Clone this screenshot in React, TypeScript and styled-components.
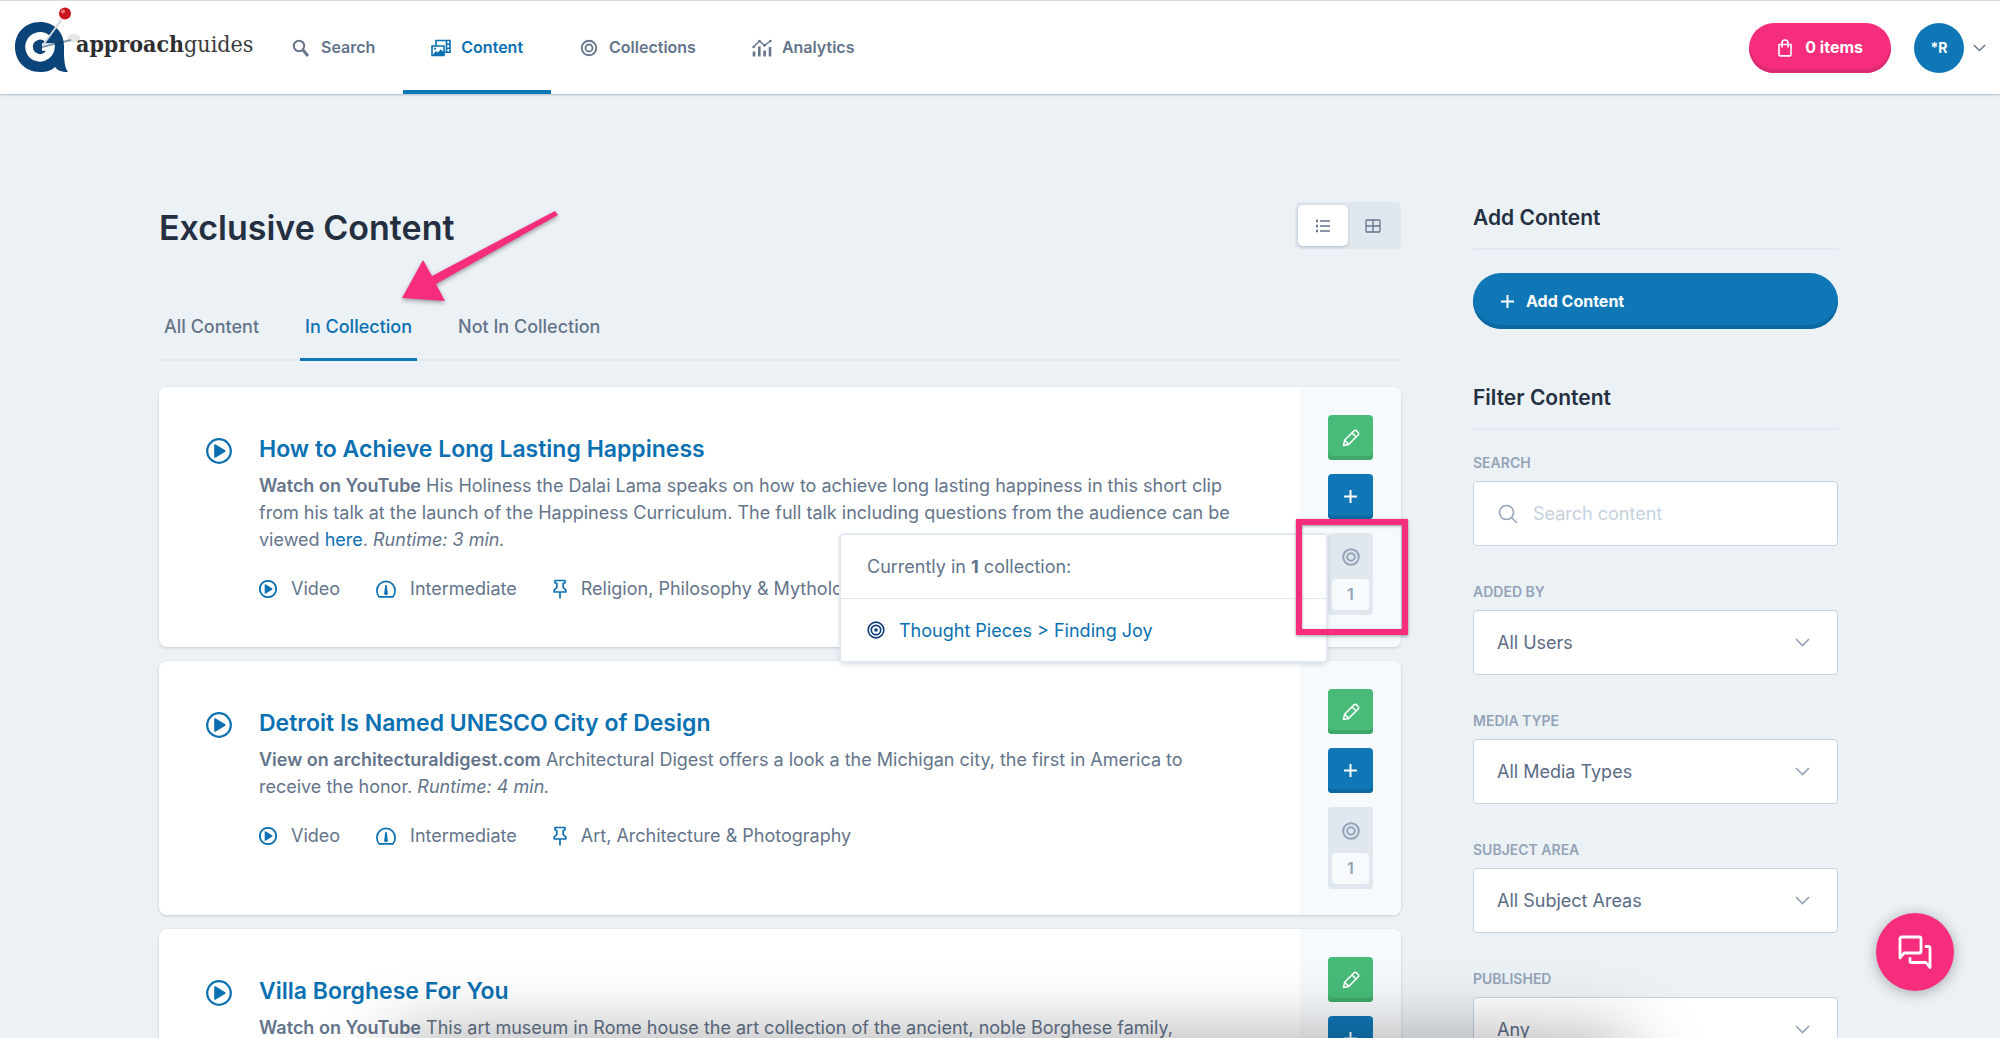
import React from "react";
import styled, { createGlobalStyle, css } from "styled-components";

const color = {
  page: "#ecf1f5",
  line: "#e1e8ef",
  text: "#64748b",
  muted: "#94a3b8",
  ink: "#242f42",
  blue: "#0a70b2",
  button: "#1077b6",
  green: "#48bb78",
  pink: "#f62d7c",
  well: "#e1e7ef",
};

const GlobalStyle = createGlobalStyle`
  *, *::before, *::after { box-sizing: border-box; }
  html { scrollbar-width: none; }
  body {
    margin: 0;
    background: ${color.page};
    color: ${color.text};
    font-family: Inter, "Liberation Sans", sans-serif;
    font-size: 18px;
    line-height: 27px;
  }
  h1, h2, h3, p { margin: 0; }
  button, input, select { font: inherit; color: inherit; }
  button { border: 0; padding: 0; cursor: pointer; }
  a { color: ${color.blue}; text-decoration: none; }
  svg { display: block; flex: none; }
`;

const Page = styled.div`
  min-height: 100vh;
  overflow: hidden;
`;

/* Header */

const Header = styled.header`
  display: flex;
  align-items: center;
  justify-content: space-between;
  height: 94px;
  padding: 0 14px 0 15px;
  background: #fff;
  border-top: 1px solid #d5dce2;
  box-shadow: 0 1px 2px rgba(30, 50, 70, 0.3);
`;

const HeaderGroup = styled.div`
  display: flex;
  align-items: center;
  align-self: stretch;
`;

const Brand = styled.a`
  display: flex;
  align-items: flex-start;
  align-self: stretch;
  width: 248px;
  padding-top: 6px;
  color: #3a3a3c;
  font-family: "DejaVu Serif Condensed", "DejaVu Serif", serif;
  font-size: 23px;
  line-height: 30px;
  svg { margin-right: -4px; }
  strong { color: #2e2e30; }
`;

const Wordmark = styled.span`
  padding-top: 22px;
`;

const Nav = styled.nav`
  display: flex;
  align-self: stretch;
`;

const NavLink = styled.a<{ $active?: boolean }>`
  display: flex;
  align-items: center;
  gap: 10px;
  padding: 0 28px;
  font-size: 16px;
  font-weight: 600;
  color: ${(p) => (p.$active ? color.blue : color.text)};
  box-shadow: ${(p) => (p.$active ? `inset 0 -4px ${color.button}` : "none")};
`;

const CartButton = styled.button`
  display: flex;
  align-items: center;
  gap: 12px;
  height: 50px;
  padding: 0 28px;
  border-radius: 25px;
  background: ${color.pink};
  box-shadow: inset 0 -4px #dc2b72;
  color: #fff;
  font-size: 16px;
  font-weight: 700;
`;

const AccountButton = styled.button`
  display: flex;
  align-items: center;
  gap: 9px;
  margin-left: 23px;
  background: none;
`;

const Avatar = styled.span`
  display: grid;
  place-items: center;
  width: 50px;
  height: 50px;
  border-radius: 50%;
  background: ${color.button};
  color: #fff;
  font-size: 14px;
  font-weight: 700;
`;

/* Page layout */

const Main = styled.main`
  display: grid;
  grid-template-columns: minmax(0, 1fr) 365px;
  gap: 72px;
  padding: 108px 162px 0 159px;
`;

const TitleRow = styled.div`
  display: flex;
  justify-content: space-between;
  align-items: flex-start;
  height: 48px;
`;

const PageTitle = styled.h1`
  padding-top: 2px;
  font-size: 34px;
  line-height: 48px;
  font-weight: 600;
  color: ${color.ink};
`;

const ViewToggle = styled.div`
  display: flex;
  padding: 3px;
  border-radius: 5px;
  background: ${color.well};
`;

const ViewButton = styled.button<{ $active?: boolean }>`
  display: grid;
  place-items: center;
  width: 50px;
  height: 41px;
  border-radius: 5px;
  background: ${(p) => (p.$active ? "#fff" : "transparent")};
  box-shadow: ${(p) => (p.$active ? "0 1px 3px rgba(40, 60, 90, 0.25)" : "none")};
`;

const Tabs = styled.nav`
  display: flex;
  gap: 36px;
  height: 68px;
  margin-top: 43px;
  margin-bottom: 26px;
  border-bottom: 2px solid ${color.line};
`;

const Tab = styled.a<{ $active?: boolean }>`
  position: relative;
  height: 68px;
  padding: 21px 5px;
  line-height: 26px;
  font-weight: 500;
  color: ${(p) => (p.$active ? color.blue : color.text)};
  border-bottom: 3px solid ${(p) => (p.$active ? color.button : "transparent")};
`;

const ArrowMark = styled.svg`
  position: absolute;
  left: 99px;
  top: -87px;
  overflow: visible;
  pointer-events: none;
  filter: drop-shadow(0 2px 2px rgba(0, 0, 0, 0.35));
`;

/* Content cards */

const CardList = styled.div`
  display: flex;
  flex-direction: column;
  gap: 14px;
`;

const Card = styled.article`
  display: flex;
  min-height: 254px;
  border-radius: 8px;
  background: #fff;
  box-shadow: 0 1px 3px rgba(40, 60, 80, 0.2);
`;

const CardIcon = styled.div`
  width: 100px;
  padding: 51px 0 0 47px;
  color: ${color.blue};
`;

const CardBody = styled.div`
  flex: 1;
  min-width: 0;
  padding: 46px 50px 45px 0;
`;

const CardTitle = styled.h2`
  margin-bottom: 7px;
  font-size: 23px;
  line-height: 32px;
  font-weight: 600;
`;

const Description = styled.p`
  strong { font-weight: 600; }
`;

const Meta = styled.ul`
  display: flex;
  gap: 36px;
  margin: 22px 0 0;
  padding: 0;
  list-style: none;
  li {
    display: flex;
    align-items: center;
    gap: 14px;
  }
  svg { color: ${color.blue}; }
`;

const CardActions = styled.div`
  display: flex;
  flex-direction: column;
  align-items: center;
  gap: 14px;
  width: 101px;
  padding: 28px 0 26px;
  border-radius: 0 8px 8px 0;
  background: #f7fafc;
`;

const ActionButton = styled.button<{ $tone: "green" | "blue" }>`
  display: grid;
  place-items: center;
  width: 45px;
  height: 45px;
  border-radius: 4px;
  color: #fff;
  ${(p) =>
    p.$tone === "green"
      ? css`
          background: ${color.green};
          box-shadow: inset 0 -4px #3fa86b;
        `
      : css`
          background: ${color.button};
          box-shadow: inset 0 -4px #0c6aa5;
        `}
`;

const CollectionBadge = styled.div`
  position: relative;
  width: 45px;
  padding: 15px 4px 5px;
  border-radius: 4px;
  background: ${color.well};
  color: ${color.muted};
  svg { margin: 0 auto; }
`;

const BadgeCount = styled.div`
  margin-top: 13px;
  border-radius: 4px;
  background: #f7fafc;
  font-size: 16px;
  line-height: 31px;
  font-weight: 600;
  text-align: center;
`;

const Popover = styled.div`
  position: absolute;
  z-index: 2;
  right: 100%;
  top: 0;
  width: 489px;
  border: 2px solid ${color.line};
  border-radius: 5px;
  background: #fff;
  color: ${color.text};
  box-shadow: 0 2px 4px rgba(40, 60, 80, 0.15);
  svg { margin: 0; color: #0b3a7a; }
`;

const PopoverRow = styled.div`
  display: flex;
  align-items: center;
  height: 63px;
  padding: 0 26px;
  gap: 14px;
  & + & { border-top: 1px dotted #cbd5e0; }
  strong { font-weight: 700; }
`;

const Highlight = styled.div`
  position: absolute;
  z-index: 3;
  left: -32px;
  top: -14px;
  width: 112px;
  height: 116px;
  border: 6px solid ${color.pink};
  box-shadow: 0 1px 3px rgba(0, 0, 0, 0.4), inset 0 1px 3px rgba(0, 0, 0, 0.4);
  pointer-events: none;
`;

/* Sidebar */

const SectionTitle = styled.h2`
  padding-bottom: 14px;
  border-bottom: 2px solid ${color.line};
  font-size: 21px;
  line-height: 32px;
  font-weight: 600;
  color: ${color.ink};
`;

const AddButton = styled.button`
  display: flex;
  align-items: center;
  gap: 12px;
  width: 100%;
  height: 56px;
  margin: 23px 0 53px;
  padding: 0 28px;
  border-radius: 28px;
  background: ${color.button};
  box-shadow: inset 0 -4px #0c68a3;
  color: #fff;
  font-size: 16px;
  font-weight: 700;
`;

const Filters = styled.form`
  display: flex;
  flex-direction: column;
  gap: 36px;
  padding: 23px 0 36px;
`;

const FieldLabel = styled.label`
  display: block;
  margin-bottom: 8px;
  font-size: 14px;
  line-height: 20px;
  font-weight: 600;
  text-transform: uppercase;
  color: ${color.muted};
`;

const Control = styled.div`
  display: grid;
  align-items: center;
  color: ${color.muted};
  > * { grid-area: 1 / 1; }
  > svg { z-index: 1; pointer-events: none; }
`;

const fieldBox = css`
  width: 100%;
  height: 65px;
  border: 1px solid #c6d3e0;
  border-radius: 4px;
  background: #fff;
  color: #5a6b85;
  font-size: 18px;
`;

const TextInput = styled.input`
  ${fieldBox}
  padding: 0 24px 0 59px;
  &::placeholder { color: #c5d1de; opacity: 1; }
`;

const Select = styled.select`
  ${fieldBox}
  padding: 0 56px 0 23px;
  appearance: none;
`;

const LeadIcon = styled.svg`
  justify-self: start;
  margin-left: 25px;
`;

const TrailIcon = styled.svg`
  justify-self: end;
  margin-right: 28px;
`;

const ChatButton = styled.button`
  position: fixed;
  right: 46px;
  bottom: 47px;
  z-index: 5;
  display: grid;
  place-items: center;
  width: 78px;
  height: 78px;
  border-radius: 50%;
  background: ${color.pink};
  color: #fff;
  box-shadow: 0 2px 14px rgba(0, 0, 0, 0.3);
`;

const BottomShade = styled.div`
  position: fixed;
  left: 400px;
  right: 380px;
  bottom: -44px;
  height: 30px;
  border-radius: 15px;
  box-shadow: 0 0 70px 14px rgba(0, 0, 0, 0.36);
  pointer-events: none;
`;

/* Icons */

const LogoMark = () => (
  <svg width="65" height="66" viewBox="0 0 65 66" aria-hidden="true">
    <ellipse cx="59" cy="31" rx="7" ry="4" fill="#e6e6e6" />
    <path
      d="M25 15C10 15 0 26 0 40s10 25 25 25c6 0 11-1 15-5 2 3 6 5 13 5-3-4-4-11-4-20v-6C49 25 39 15 25 15z"
      fill="#0a4478"
    />
    <path
      d="M32.500 31.800A11 11 0 1 0 36 40H27"
      fill="none"
      stroke="#fff"
      strokeWidth="7.500"
      transform="translate(0 0)"
    />
    <path d="M27 40 56 33" stroke="#123a60" strokeWidth="2" opacity=".5" />
    <path d="M28 38 47 12" stroke="#d5d8dc" strokeWidth="2" />
    <circle cx="50" cy="6.500" r="6" fill="#c8141c" />
    <circle cx="48" cy="4.500" r="2" fill="#ee7a7c" />
  </svg>
);

const NavSearchIcon = () => (
  <svg width="20" height="20" viewBox="0 0 20 20" fill="none" stroke="currentColor" aria-hidden="true">
    <circle cx="8" cy="8" r="5.2" strokeWidth="2" />
    <path d="m12 12 5 6" strokeWidth="2.8" />
  </svg>
);

const ContentIcon = () => (
  <svg width="20" height="20" viewBox="0 0 20 20" fill="none" stroke="currentColor" strokeWidth="1.6" aria-hidden="true">
    <path d="M1 8h12v9.5H1z" />
    <path d="M5 8V2.5h14v11.7h-6M15.5 2.5v11.7M15.5 6.2H19M15.5 10.2H19" />
    <path d="m1.5 17 3.5-4 2 1.6 2.6-3.4L13 14.6V17z" fill="currentColor" stroke="none" />
    <circle cx="4" cy="10.7" r="1.1" fill="currentColor" stroke="none" />
  </svg>
);

type TargetProps = { size: number; dot?: boolean; weight?: number; inset?: number };

const TargetIcon = ({ size, dot, weight = 1.8, inset = 0 }: TargetProps) => (
  <svg
    width={size}
    height={size}
    viewBox={`${-inset} ${-inset} ${20 + inset * 2} ${20 + inset * 2}`}
    fill="none"
    stroke="currentColor"
    strokeWidth={weight}
    aria-hidden="true"
  >
    <circle cx="10" cy="10" r="8.7" />
    <circle cx="10" cy="10" r={dot ? 5.2 : 4.2} />
    {dot && <circle cx="10" cy="10" r="2" fill="currentColor" stroke="none" />}
  </svg>
);

const AnalyticsIcon = () => (
  <svg width="20" height="20" viewBox="0 0 20 20" fill="none" stroke="currentColor" aria-hidden="true">
    <path d="M2 18.5v-5M7.3 18.5V8.5M12.6 18.5v-6M18 18.5V9" strokeWidth="2.6" />
    <path d="M1.5 9 7.5 3l5 4.5L18.5 3" strokeWidth="1.4" />
    <g fill="currentColor" stroke="none">
      <circle cx="1.6" cy="9" r="1.3" />
      <circle cx="7.5" cy="3" r="1.3" />
      <circle cx="12.5" cy="7.4" r="1.3" />
      <circle cx="18.4" cy="3" r="1.3" />
    </g>
  </svg>
);

const BagIcon = () => (
  <svg width="16" height="18" viewBox="0 0 16 18" fill="none" stroke="currentColor" strokeWidth="1.6" aria-hidden="true">
    <path d="M2 5.5h12v10a1.4 1.4 0 0 1-1.4 1.4H3.4A1.4 1.4 0 0 1 2 15.500z" strokeLinejoin="round" />
    <path d="M5 8V4a3 3 0 0 1 6 0v4" strokeLinecap="round" />
  </svg>
);

const ListIcon = () => (
  <svg width="16" height="14" viewBox="0 0 16 14" stroke="#64748b" aria-hidden="true">
    <path d="M5 2h10M5 7h10M5 12h10" strokeWidth="1.3" />
    <path d="M1 2h2M1 7h2M1 12h2" strokeWidth="2.4" />
  </svg>
);

const GridIcon = () => (
  <svg width="16" height="14" viewBox="0 0 16 14" fill="none" stroke="#64748b" strokeWidth="1.3" aria-hidden="true">
    <rect x="1" y="1" width="14" height="12" rx="1" />
    <path d="M8 1v12M1 7h14" />
  </svg>
);

const PlayIcon = ({ size }: { size: number }) => (
  <svg width={size} height={size} viewBox="0 0 26 26" fill="none" stroke="currentColor" aria-hidden="true">
    <circle cx="13" cy="13" r="11.8" strokeWidth={size > 20 ? 2.2 : 2.6} />
    <path d="M9 7v12l9.800-6z" fill="currentColor" strokeWidth="1.600" strokeLinejoin="round" />
  </svg>
);

const GaugeIcon = () => (
  <svg width="20" height="18" viewBox="0 0 20 18" fill="none" stroke="currentColor" strokeWidth="1.7" aria-hidden="true">
    <path d="M3 16.800C1.600 15.200.900 13 .900 10.500a9.100 9.100 0 0 1 18.200 0c0 2.500-.700 4.700-2.100 6.300z" strokeLinejoin="round" />
    <path d="M9.300 5h1.400l1 7.500a1.900 1.900 0 1 1-3.400 0z" fill="currentColor" stroke="none" />
  </svg>
);

const PinIcon = () => (
  <svg width="14" height="20" viewBox="0 0 14 20" fill="none" stroke="currentColor" strokeWidth="1.7" strokeLinejoin="round" aria-hidden="true">
    <path d="M2 1.500h10v2.300l-1.800.700v4l2.600 2.700v1.800H1.200v-1.800l2.600-2.700v-4L2 3.800z" />
    <path d="M7 13v6.500" />
  </svg>
);

const PencilIcon = () => (
  <svg width="18" height="18" viewBox="0 0 18 18" fill="none" stroke="currentColor" strokeWidth="1.5" strokeLinejoin="round" aria-hidden="true">
    <path d="M1.500 16.500 2.600 11.300 12 1.900a1.800 1.800 0 0 1 2.500 0l1.600 1.600a1.800 1.800 0 0 1 0 2.500l-9.400 9.400z" />
    <path d="m2.600 11.300 4.100 4.100M10 3.900l4.100 4.100" />
  </svg>
);

const PlusIcon = () => (
  <svg width="13" height="13" viewBox="0 0 13 13" stroke="currentColor" strokeWidth="2" aria-hidden="true">
    <path d="M6.500 0v13M0 6.500h13" />
  </svg>
);

const ChatIcon = () => (
  <svg width="36" height="36" viewBox="0 0 36 36" fill="none" stroke="currentColor" strokeWidth="2.8" strokeLinejoin="round" strokeLinecap="round" aria-hidden="true">
    <path d="M3 24V4.500A1.500 1.500 0 0 1 4.500 3h18A1.500 1.500 0 0 1 24 4.500v13a1.500 1.500 0 0 1-1.500 1.500H7z" />
    <path d="M29 12.500h2.500a1.500 1.500 0 0 1 1.500 1.500v19.500l-4-5H14.500A1.500 1.500 0 0 1 13 27v-2.500" />
  </svg>
);

const chevronPath = <path d="m1 1 6.500 6.500L14 1" fill="none" stroke="currentColor" strokeWidth="1.6" />;

/* Data */

type Item = {
  title: string;
  text: React.ReactNode;
  topic?: string;
  count?: number;
  open?: boolean;
};

const items: Item[] = [
  {
    title: "How to Achieve Long Lasting Happiness",
    text: (
      <>
        <strong>Watch on YouTube</strong> His Holiness the Dalai Lama speaks on how to achieve long
        lasting happiness in this short clip from his talk at the launch of the Happiness Curriculum.
        The full talk including questions from the audience can be viewed <a href="#here">here</a>.{" "}
        <em>Runtime: 3 min.</em>
      </>
    ),
    topic: "Religion, Philosophy & Mythology",
    count: 1,
    open: true,
  },
  {
    title: "Detroit Is Named UNESCO City of Design",
    text: (
      <>
        <strong>View on architecturaldigest.com</strong> Architectural Digest offers a look a the
        Michigan city, the first in America to receive the honor. <em>Runtime: 4 min.</em>
      </>
    ),
    topic: "Art, Architecture & Photography",
    count: 1,
  },
  {
    title: "Villa Borghese For You",
    text: (
      <>
        <strong>Watch on YouTube</strong> This art museum in Rome house the art collection of the
        ancient, noble Borghese family,
      </>
    ),
  },
];

const filters = [
  { id: "added-by", label: "Added by", value: "All Users" },
  { id: "media-type", label: "Media type", value: "All Media Types" },
  { id: "subject-area", label: "Subject area", value: "All Subject Areas" },
  { id: "published", label: "Published", value: "Any" },
];

const ContentCard = ({ item }: { item: Item }) => (
  <Card>
    <CardIcon>
      <PlayIcon size={26} />
    </CardIcon>
    <CardBody>
      <CardTitle>
        <a href="#item">{item.title}</a>
      </CardTitle>
      <Description>{item.text}</Description>
      {item.topic && (
        <Meta>
          <li>
            <PlayIcon size={18} />
            Video
          </li>
          <li>
            <GaugeIcon />
            Intermediate
          </li>
          <li>
            <PinIcon />
            {item.topic}
          </li>
        </Meta>
      )}
    </CardBody>
    <CardActions>
      <ActionButton $tone="green" aria-label="Edit">
        <PencilIcon />
      </ActionButton>
      <ActionButton $tone="blue" aria-label="Add">
        <PlusIcon />
      </ActionButton>
      {item.count && (
        <CollectionBadge>
          <TargetIcon size={18} weight={2.2} />
          <BadgeCount>{item.count}</BadgeCount>
          {item.open && (
            <>
              <Popover>
                <PopoverRow>
                  <p>
                    Currently in <strong>1</strong> collection:
                  </p>
                </PopoverRow>
                <PopoverRow>
                  <TargetIcon size={18} dot />
                  <a href="#collection">Thought Pieces &gt; Finding Joy</a>
                </PopoverRow>
              </Popover>
              <Highlight />
            </>
          )}
        </CollectionBadge>
      )}
    </CardActions>
  </Card>
);

export default function App() {
  return (
    <Page>
      <GlobalStyle />
      <Header>
        <HeaderGroup>
          <Brand href="#home">
            <LogoMark />
            <Wordmark>
              <strong>approach</strong>guides
            </Wordmark>
          </Brand>
          <Nav>
            <NavLink href="#search">
              <NavSearchIcon />
              Search
            </NavLink>
            <NavLink href="#content" $active>
              <ContentIcon />
              Content
            </NavLink>
            <NavLink href="#collections">
              <TargetIcon size={20} weight={2.2} inset={2} />
              Collections
            </NavLink>
            <NavLink href="#analytics">
              <AnalyticsIcon />
              Analytics
            </NavLink>
          </Nav>
        </HeaderGroup>
        <HeaderGroup>
          <CartButton>
            <BagIcon />0 items
          </CartButton>
          <AccountButton aria-label="Account">
            <Avatar>*R</Avatar>
            <svg width="13" height="8" viewBox="0 0 15 9" aria-hidden="true">
              {chevronPath}
            </svg>
          </AccountButton>
        </HeaderGroup>
      </Header>

      <Main>
        <section>
          <TitleRow>
            <PageTitle>Exclusive Content</PageTitle>
            <ViewToggle>
              <ViewButton $active aria-label="List view">
                <ListIcon />
              </ViewButton>
              <ViewButton aria-label="Grid view">
                <GridIcon />
              </ViewButton>
            </ViewToggle>
          </TitleRow>
          <Tabs>
            <Tab href="#all">All Content</Tab>
            <Tab href="#in" $active>
              In Collection
              <ArrowMark width="160" height="94" viewBox="0 0 160 94" aria-hidden="true">
                <path d="M3 92 24 54 33 70 156 5 159 9 37 78 46 95z" fill={color.pink} />
              </ArrowMark>
            </Tab>
            <Tab href="#not-in">Not In Collection</Tab>
          </Tabs>
          <CardList>
            {items.map((item) => (
              <ContentCard key={item.title} item={item} />
            ))}
          </CardList>
        </section>

        <aside>
          <SectionTitle>Add Content</SectionTitle>
          <AddButton>
            <PlusIcon />
            Add Content
          </AddButton>
          <SectionTitle>Filter Content</SectionTitle>
          <Filters>
            <div>
              <FieldLabel htmlFor="search">Search</FieldLabel>
              <Control>
                <TextInput id="search" type="text" placeholder="Search content" />
                <LeadIcon width="20" height="20" viewBox="0 0 20 20" fill="none" stroke="currentColor" strokeWidth="1.6">
                  <circle cx="8.5" cy="8.5" r="7" />
                  <path d="m13.500 13.500 5.500 5.500" />
                </LeadIcon>
              </Control>
            </div>
            {filters.map((f) => (
              <div key={f.id}>
                <FieldLabel htmlFor={f.id}>{f.label}</FieldLabel>
                <Control>
                  <Select id={f.id} defaultValue={f.value}>
                    <option>{f.value}</option>
                  </Select>
                  <TrailIcon width="15" height="9" viewBox="0 0 15 9">
                    {chevronPath}
                  </TrailIcon>
                </Control>
              </div>
            ))}
          </Filters>
        </aside>
      </Main>

      <BottomShade />
      <ChatButton aria-label="Open chat">
        <ChatIcon />
      </ChatButton>
    </Page>
  );
}
